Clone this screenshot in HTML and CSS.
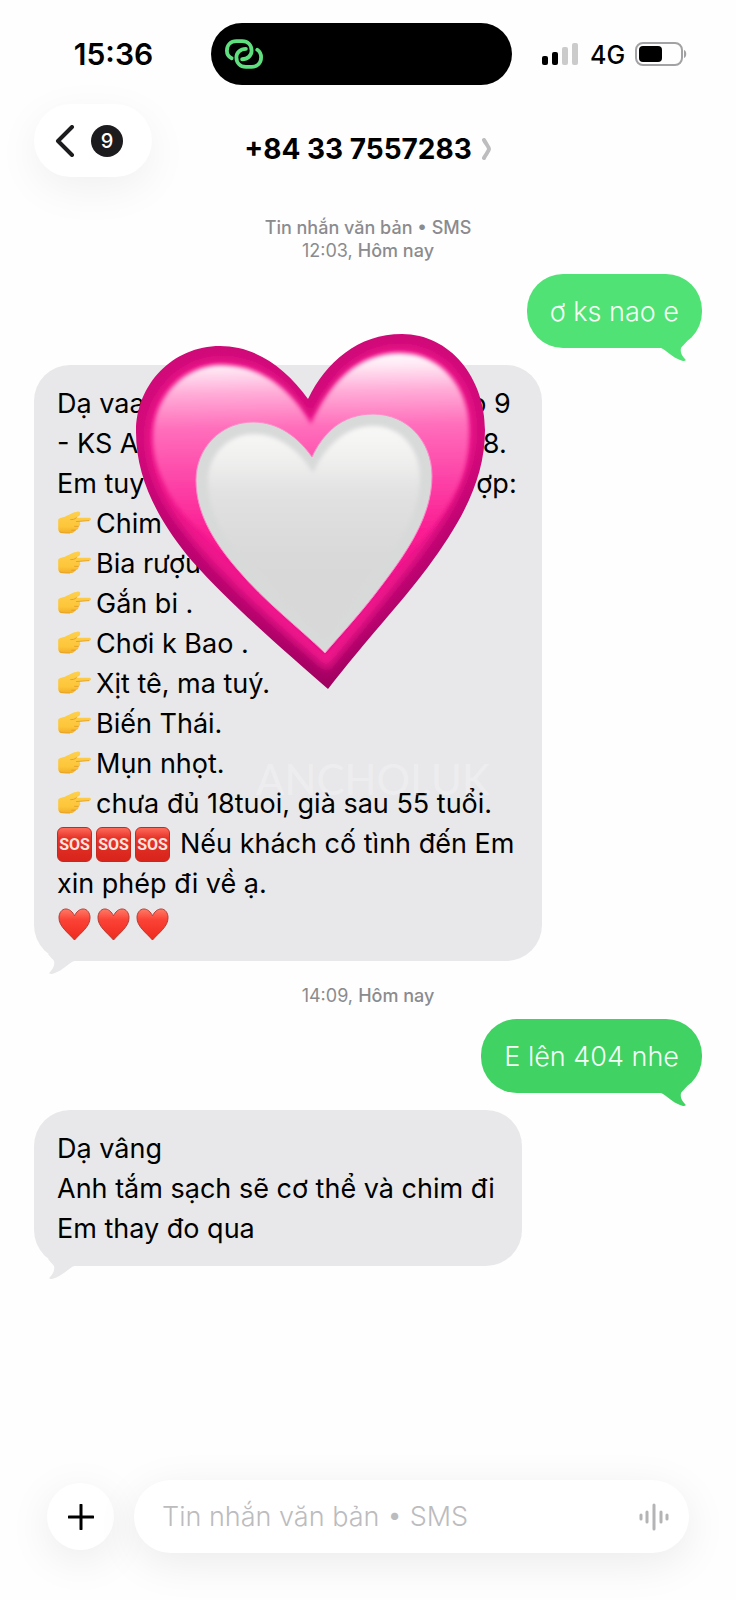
FILE: index.html
```html
<!DOCTYPE html>
<html lang="vi">
<head>
<meta charset="utf-8">
<meta name="viewport" content="width=device-width, initial-scale=1">
<title>+84 33 7557283</title>
<link rel="stylesheet" href="styles.css">
</head>
<body>
<svg class="defs" aria-hidden="true">
  <defs>
    <linearGradient id="handFill" x1="0" y1="0" x2="0" y2="1">
      <stop offset="0" stop-color="#fdd04c"/><stop offset=".7" stop-color="#fdc63a"/><stop offset="1" stop-color="#f2ae28"/>
    </linearGradient>
    <linearGradient id="redFill" x1="0" y1="0" x2="0" y2="1">
      <stop offset="0" stop-color="#ff7a66"/><stop offset=".35" stop-color="#fb4236"/><stop offset="1" stop-color="#ee2a1e"/>
    </linearGradient>
    <symbol id="tail" viewBox="0 0 30 20">
      <path d="M0 5 L6 8 C12 12 18 18 26 20 C29 20 29 19 28 18 C25 15 23 11 24 7 C25 5 28 3 30 0 L8 0 Z"/>
    </symbol>
    <symbol id="hand" viewBox="0 0 36 24">
      <path d="M1 9 C2 7 6 7 10 5 C14 3 17 1 20 1 C23 0 24 1 24 3 C24 5 21 6 20 7 L33 7 C36 7 36 10 33 10 L23 11 C25 13 24 16 22 16 C23 18 21 20 19 20 C18 22 16 23 13 23 L5 23 C2 23 1 21 1 18 Z" fill="url(#handFill)"/>
      <path d="M20 7 C18 9 16 9 14 9 M33 10 L20 11 M22 16 L18 16 M19 20 L15 20 M3 22 C6 23 9 23 13 23" fill="none" stroke="#e3a02a" stroke-width="1" stroke-linecap="round"/>
    </symbol>
    <symbol id="redheart" viewBox="0 0 34 34">
      <path d="M17 8 C19 4 22 1 26 1 C30 1 33 5 33 10 C33 19 24 25 17 33 C10 25 1 19 1 10 C1 5 4 1 8 1 C12 1 15 4 17 8 Z" fill="url(#redFill)" stroke="#b23a32" stroke-width="1"/>
    </symbol>
  </defs>
</svg>

<div class="phone">
  <div class="status">
    <time class="clock">15:36</time>
    <div class="island">
      <svg class="link-icon" viewBox="0 0 40 32" aria-hidden="true">
        <g fill="none" stroke="#5fe07f" stroke-width="4" stroke-linecap="round">
          <path d="M7 20 C3 18 2 15 2 12 C2 6 6 2 12 2 L18 2 C24 2 28 6 28 12 C28 17 24 21 18 21"/>
          <path d="M34 11 C37 13 38 17 38 19 C38 25 34 29 28 29 L22 29 C16 29 12 25 12 19 C12 14 16 10 22 10"/>
        </g>
      </svg>
    </div>
    <div class="indicators">
      <svg class="signal" viewBox="0 0 36 22" aria-hidden="true">
        <rect x="0" y="13" width="6" height="9" rx="2"/><rect x="10" y="9" width="6" height="13" rx="2"/>
        <g fill="#cbcbcb"><rect x="20" y="4" width="6" height="18" rx="2"/><rect x="30" y="0" width="6" height="22" rx="2"/></g>
      </svg>
      <span class="network">4G</span>
      <svg class="battery" viewBox="0 0 52 24" aria-hidden="true">
        <rect x="1" y="1" width="46" height="22" rx="7" fill="none" stroke="#a2a2a4" stroke-width="2"/>
        <rect x="4" y="4" width="23" height="16" rx="4"/>
        <path d="M49 8 C52 9 52 15 49 16 Z" fill="#a2a2a4"/>
      </svg>
    </div>
  </div>

  <header class="header">
    <button class="back" type="button" aria-label="Quay lại">
      <svg class="back-icon" viewBox="0 0 20 32" aria-hidden="true"><path d="M17 2 L3 16 L17 30" fill="none" stroke="#1c1c1e" stroke-width="4" stroke-linecap="round" stroke-linejoin="round"/></svg>
      <span class="count">9</span>
    </button>
    <h1 class="title">+84 33 7557283
      <svg class="title-icon" viewBox="0 0 10 22" aria-hidden="true"><path d="M2 2 C4 6 7 9 7 11 C7 13 4 16 2 20" fill="none" stroke="#bdbdbf" stroke-width="4" stroke-linecap="round" stroke-linejoin="round"/></svg>
    </h1>
  </header>

  <main class="thread">
    <p class="stamp"><strong>Tin nhắn văn bản • SMS</strong><br>12:03, <strong>Hôm nay</strong></p>

    <div class="bubble sent light">ơ ks nao e<svg class="tail" aria-hidden="true"><use href="#tail"/></svg></div>

    <div class="bubble received long">
      <div class="split"><span>Dạ vaa</span><span class="end-a">o 9</span></div>
      <div class="split"><span>- KS A</span><span class="end-b">8.</span></div>
      <div class="split"><span>Em tuy</span><span class="end-c">ợp:</span></div>
      <div><svg class="emoji"><use href="#hand"/></svg>Chim</div>
      <div><svg class="emoji"><use href="#hand"/></svg>Bia rượu</div>
      <div><svg class="emoji"><use href="#hand"/></svg>Gắn bi .</div>
      <div><svg class="emoji"><use href="#hand"/></svg>Chơi k Bao .</div>
      <div><svg class="emoji"><use href="#hand"/></svg>Xịt tê, ma tuý.</div>
      <div><svg class="emoji"><use href="#hand"/></svg>Biến Thái.</div>
      <div><svg class="emoji"><use href="#hand"/></svg>Mụn nhọt.</div>
      <div><svg class="emoji"><use href="#hand"/></svg>chưa đủ 18tuoi, già sau 55 tuổi.</div>
      <div class="alert"><span class="sos">SOS</span><span class="sos">SOS</span><span class="sos">SOS</span><span class="alert-text">Nếu khách cố tình đến Em</span></div>
      <div>xin phép đi về ạ.</div>
      <div class="hearts"><svg class="emoji"><use href="#redheart"/></svg><svg class="emoji"><use href="#redheart"/></svg><svg class="emoji"><use href="#redheart"/></svg></div>
      <span class="watermark">ANCHOI.UK</span>
      <svg class="sticker" viewBox="134 332 354 360" aria-hidden="true">
        <defs>
          <linearGradient id="rim" x1="0" y1="0" x2="0" y2="1">
            <stop offset="0" stop-color="#cf0a78"/><stop offset=".3" stop-color="#d20a7a"/><stop offset=".55" stop-color="#bd0470"/><stop offset=".8" stop-color="#b4036b"/><stop offset="1" stop-color="#a00060"/>
          </linearGradient>
          <linearGradient id="pink" gradientUnits="userSpaceOnUse" x1="300" y1="350" x2="306" y2="670">
            <stop offset="0" stop-color="#fff"/><stop offset=".05" stop-color="#ffeaf5"/><stop offset=".13" stop-color="#ffadd8"/><stop offset=".24" stop-color="#ff6ebb"/><stop offset=".42" stop-color="#fd40a6"/><stop offset=".58" stop-color="#fb1c92"/><stop offset=".78" stop-color="#e30f84"/><stop offset="1" stop-color="#b8046b"/>
          </linearGradient>
          <linearGradient id="silver" x1="0" y1="0" x2="0" y2="1">
            <stop offset="0" stop-color="#f8f8f7"/><stop offset=".14" stop-color="#f1f1f0"/><stop offset=".3" stop-color="#e2e2e2"/><stop offset=".6" stop-color="#d9d9d9"/><stop offset="1" stop-color="#d8d8d8"/>
          </linearGradient>
          <filter id="glow" x="-10%" y="-10%" width="120%" height="120%"><feGaussianBlur stdDeviation="5"/></filter>
          <filter id="soft" x="-10%" y="-10%" width="120%" height="120%"><feGaussianBlur stdDeviation="2"/></filter>
          <clipPath id="outer"><path d="M308 399 C326 362 358 334 402 334 C450 334 485 378 485 430 C485 480 461 522 428 567 C402 602 366 640 328 689 C286 652 232 606 192 561 C160 523 136 480 136 432 C136 384 173 346 220 346 C256 346 286 368 308 399 Z"/></clipPath>
        </defs>
        <g clip-path="url(#outer)">
          <rect x="134" y="332" width="354" height="360" fill="url(#rim)"/>
          <path d="M311 419 C330 377 358 347 400 347 C448 347 475 388 474 430 C474 480 444 524 412 566 C384 602 352 640 327 670 C290 638 242 597 204 555 C170 517 147 480 147 438 C147 393 180 359 221 359 C260 359 290 382 311 419 Z" fill="#f0188c" filter="url(#glow)"/>
          <path d="M311 424 C330 382 358 353 400 353 C442 353 470 390 469 430 C469 460 463 480 450 502 C430 534 414 548 382 585 L325 653 L238 570 C205 530 180 520 164 483 C156 466 153 452 153 438 C153 397 184 365 221 365 C260 365 290 388 311 424 Z" fill="url(#pink)" filter="url(#soft)"/>
        </g>
        <path d="M312 457 C323 433 342 414 373 414 C408 414 432 442 432 476 C432 516 407 552 382 585 C362 612 343 632 325 653 C298 627 264 601 238 570 C212 540 196 512 196 480 C196 448 221 422 253 422 C278 422 298 437 312 457 Z" fill="#d8d9d9" stroke="#ff8ccb" stroke-width="1"/>
        <path d="M313 473 C325 446 346 426 373 426 C402 426 420 450 420 478 C420 515 396 548 372 580 C356 603 340 622 325 641 C300 618 270 592 246 563 C222 535 208 510 208 482 C208 455 228 434 254 434 C278 434 299 450 313 473 Z" fill="url(#silver)" filter="url(#soft)"/>
      </svg>
      <svg class="tail" aria-hidden="true"><use href="#tail"/></svg>
    </div>

    <p class="stamp later">14:09, <strong>Hôm nay</strong></p>

    <div class="bubble sent">E lên 404 nhe<svg class="tail" aria-hidden="true"><use href="#tail"/></svg></div>

    <div class="bubble received reply">
      <div>Dạ vâng</div>
      <div>Anh tắm sạch sẽ cơ thể và chim đi</div>
      <div>Em thay đo qua</div>
      <svg class="tail" aria-hidden="true"><use href="#tail"/></svg>
    </div>
  </main>

  <form class="composer">
    <button class="plus" type="button" aria-label="Thêm">
      <svg class="plus-icon" viewBox="0 0 26 26" aria-hidden="true"><path d="M13 1 V25 M1 13 H25" stroke="#000" stroke-width="3" stroke-linecap="round"/></svg>
    </button>
    <div class="field">
      <input class="input" type="text" placeholder="Tin nhắn văn bản • SMS" aria-label="Tin nhắn văn bản">
      <button class="voice" type="button" aria-label="Ghi âm">
        <svg class="voice-icon" viewBox="0 0 30 28" aria-hidden="true"><path d="M2 12 V16 M8 9 V19 M15 2 V26 M22 9 V19 M28 12 V16" stroke="#b4b4b6" stroke-width="3" stroke-linecap="round"/></svg>
      </button>
    </div>
  </form>
</div>
</body>
</html>
```
FILE: styles.css
```css
* {
  box-sizing: border-box;
}

body {
  margin: 0;
  background: #fefefe;
  color: #000;
  font-family: Inter, "Noto Sans", sans-serif;
}

button {
  border: 0;
  padding: 0;
  background: #fff;
  font: inherit;
  color: inherit;
}

.defs {
  position: absolute;
  width: 0;
  height: 0;
}

.phone {
  display: flex;
  flex-direction: column;
  min-height: 100vh;
  overflow: hidden;
}

.status {
  display: grid;
  grid-template-columns: 211fr 301fr 224fr;
  align-items: center;
  padding-top: 23px;
}

.clock {
  padding-left: 16px;
  text-align: center;
  font-size: 30px;
  font-weight: 600;
}

.island {
  display: flex;
  align-items: center;
  height: 62px;
  padding-left: 14px;
  border-radius: 31px;
  background: #000;
}

.link-icon {
  width: 38px;
  height: 31px;
}

.indicators {
  display: flex;
  align-items: center;
  padding-left: 30px;
}

.signal {
  width: 36px;
  height: 22px;
}

.network {
  margin: 2px 10px 0 12px;
  font-size: 25px;
  font-weight: 500;
}

.battery {
  width: 52px;
  height: 24px;
}

.header {
  display: grid;
  grid-template-columns: 1fr auto 1fr;
  align-items: center;
  margin-top: 19px;
  padding: 0 34px;
}

.back {
  display: flex;
  align-items: center;
  gap: 16px;
  width: 118px;
  height: 73px;
  padding-left: 21px;
  border-radius: 37px;
  box-shadow: 0 12px 44px rgba(0, 0, 0, 0.06);
}

.back-icon {
  width: 20px;
  height: 32px;
}

.count {
  width: 32px;
  height: 32px;
  border-radius: 50%;
  background: #1c1c1e;
  color: #fff;
  font-size: 20px;
  font-weight: 500;
  line-height: 32px;
  text-align: center;
}

.title {
  display: flex;
  align-items: center;
  gap: 10px;
  margin: 16px 0 0;
  font-size: 28px;
  font-weight: 700;
}

.title-icon {
  width: 10px;
  height: 22px;
}

.thread {
  display: flex;
  flex-direction: column;
  padding: 0 34px;
}

.stamp {
  margin: 39px 0 12px;
  color: #8b8b8e;
  font-size: 18px;
  line-height: 23px;
  text-align: center;
}

.stamp strong {
  font-weight: 500;
}

.stamp.later {
  margin-top: 23px;
}

.bubble {
  position: relative;
  border-radius: 36px;
  font-size: 27px;
  line-height: 40px;
}

.sent {
  align-self: flex-end;
  padding: 18px 23px 16px;
  background: #40d263;
  color: #f4fff6;
  fill: #40d263;
  font-weight: 300;
}

.sent.light {
  background: #50e274;
  fill: #50e274;
}

.received {
  margin-top: 17px;
  padding: 19px 23px 17px;
  background: #e8e8ea;
  fill: #e8e8ea;
  white-space: nowrap;
}

.long {
  width: 76%;
}

.reply {
  width: 73%;
}

.tail {
  position: absolute;
  right: 15px;
  bottom: -13px;
  width: 30px;
  height: 20px;
}

.received .tail {
  right: auto;
  left: 14px;
  transform: scaleX(-1);
}

.split {
  display: flex;
  justify-content: space-between;
}

.end-a {
  padding-right: 8px;
}

.end-b {
  padding-right: 12px;
}

.end-c {
  padding-right: 2px;
}

.emoji {
  width: 35px;
  height: 23px;
  margin-right: 4px;
  vertical-align: -1px;
}

.hearts,
.alert {
  display: flex;
  align-items: center;
  height: 40px;
}

.hearts .emoji {
  height: 33px;
}

.sos {
  width: 35px;
  height: 35px;
  margin-right: 4px;
  border: 1px solid #c52a20;
  border-radius: 6px;
  background: linear-gradient(#ff6a58, #e6342a 30%, #d8241b);
  color: #ffe3dd;
  font-family: Roboto, sans-serif;
  font-size: 16px;
  font-weight: 700;
  line-height: 33px;
  text-align: center;
}

.alert-text {
  margin-left: 6px;
}

.watermark {
  position: absolute;
  top: 394px;
  left: 222px;
  color: rgba(255, 255, 255, 0.25);
  font-family: Lato, sans-serif;
  font-size: 42px;
}

.sticker {
  position: absolute;
  top: -33px;
  left: 100px;
  width: 354px;
  height: 360px;
}

.composer {
  display: flex;
  align-items: center;
  gap: 20px;
  margin-top: auto;
  padding: 0 47px 47px;
}

.plus {
  display: grid;
  place-items: center;
  flex: none;
  width: 67px;
  height: 67px;
  border-radius: 50%;
  box-shadow: 0 10px 44px rgba(0, 0, 0, 0.08);
}

.plus-icon {
  width: 26px;
  height: 26px;
}

.field {
  display: flex;
  flex: 1;
  align-items: center;
  height: 73px;
  padding: 0 20px 0 28px;
  border-radius: 37px;
  background: #fff;
  box-shadow: 0 10px 44px rgba(0, 0, 0, 0.08);
}

.input {
  flex: 1;
  min-width: 0;
  border: 0;
  padding: 0;
  outline: 0;
  background: none;
  font: inherit;
  font-size: 27px;
  font-weight: 300;
}

.input::placeholder {
  color: #bcbcbe;
}

.voice-icon {
  display: block;
  width: 30px;
  height: 28px;
}
```
